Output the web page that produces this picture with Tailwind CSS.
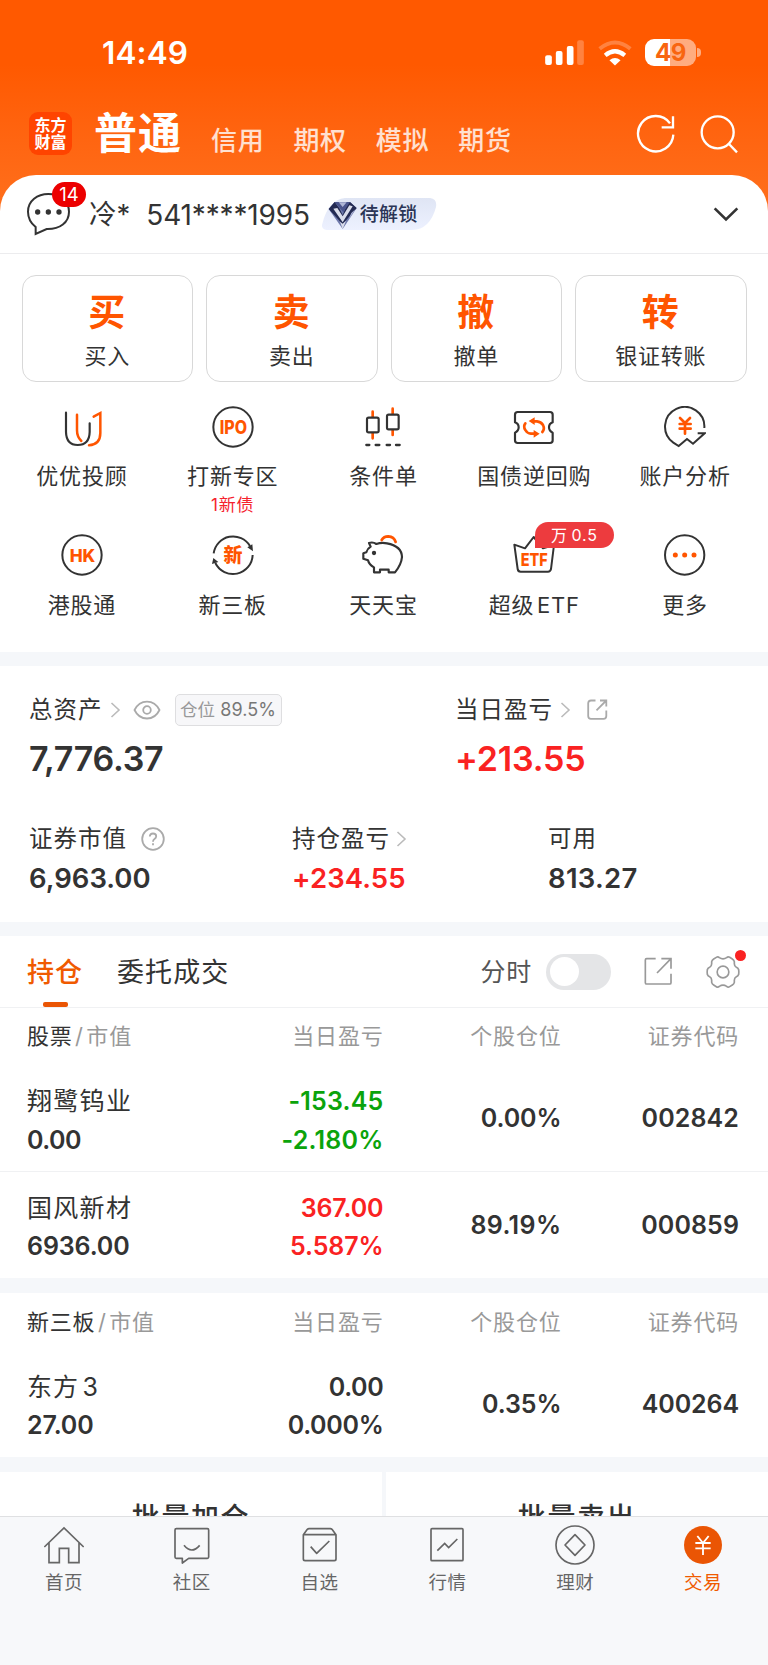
<!DOCTYPE html>
<html lang="zh-CN">
<head>
<meta charset="utf-8">
<title>普通交易</title>
<script src="https://cdn.jsdelivr.net/npm/@tailwindcss/browser@4"></script>
</head>
<body class="w-[768px] h-[1665px] overflow-hidden bg-white text-[#333] leading-none whitespace-nowrap font-['Inter','Noto_Sans_CJK_SC',sans-serif]">
<div class="flex h-[1665px] flex-col overflow-hidden">

<header class="h-[215px] shrink-0 bg-linear-to-b from-[#ff5900] from-30% to-[#ff701c] text-white">
  <div class="flex h-[105px] items-center pl-[102px] pr-[67px]">
    <span class="text-[31.5px] font-semibold tracking-[0.1px]">14:49</span>
    <svg class="ml-auto h-[25px] w-[39px]" viewBox="484 117 116 75" fill="#fff"><rect x="484" y="163" width="20" height="29" rx="6"/><rect x="516" y="150" width="20" height="42" rx="6"/><rect x="549" y="135" width="20" height="57" rx="6"/><rect x="580" y="118" width="20" height="74" rx="6" opacity=".25"/></svg>
    <svg class="ml-[14px] h-[26px] w-[34px]" viewBox="640 115 104 78" fill="none" stroke="#fff"><path d="M645 141Q692 103 739 141" stroke-width="12" opacity=".25"/><path d="M662 161Q692 136 722 161" stroke-width="13"/><path d="M692 192L675 176Q692 162 709 176Z" fill="#fff" stroke="none"/></svg>
    <div class="ml-[13px] flex items-center gap-px">
      <div class="flex h-[27px] w-[51px] items-center justify-center rounded-[9px] bg-linear-to-r from-white from-50% to-white/50 to-50% text-[24px] font-bold tracking-[-0.5px] text-[#f86510]">49</div>
      <div class="h-[9px] w-[4px] rounded-r-full bg-white/50"></div>
    </div>
  </div>
  <div class="flex h-[57px] items-center pl-[29px] pr-[29px]">
    <div class="flex size-[43px] flex-col items-center justify-center rounded-[9px] bg-[#ff4400] text-[16px] font-bold leading-[17px]"><span>东方</span><span>财富</span></div>
    <span class="ml-[22px] text-[43px] font-bold tracking-[1px]">普通</span>
    <div class="flex gap-[29px] pl-[29px] pt-[14px] text-[26px] font-medium tracking-[0.7px] text-white/80"><span>信用</span><span>期权</span><span>模拟</span><span>期货</span></div>
    <svg class="ml-auto size-[40px]" viewBox="755 343 120 120" fill="none" stroke="#fff" stroke-width="7"><path d="M867 405A53 53 0 1 1 857 371M866 350V383H832"/></svg>
    <svg class="ml-[23px] size-[40px]" viewBox="943 341 120 120" fill="none" stroke="#fff" stroke-width="7"><circle cx="999" cy="396" r="48"/><path d="M1033 431L1057 456"/></svg>
  </div>
</header>

<section class="-mt-[40px] flex h-[79px] shrink-0 items-center rounded-t-[36px] border-b border-[#ececee] bg-white pl-[26px] pr-[29px]">
  <div class="relative h-[44px] w-[46px]">
    <svg class="h-[44px] w-[46px]" viewBox="78 576 138 132" fill="none" stroke="#333" stroke-width="6"><path d="M107 702V681C92 669 84 653 84 635C84 603 112 582 145 582C180 582 207 604 207 635C207 667 180 688 140 687Z"/><g fill="#333" stroke="none"><circle cx="113" cy="636" r="8"/><circle cx="145" cy="636" r="8"/><circle cx="177" cy="636" r="8"/></g></svg>
    <span class="absolute left-[26px] -top-[10px] flex h-[25px] w-[34px] items-center justify-center rounded-full bg-[#ec0000] text-[18.5px] text-white">14</span>
  </div>
  <span class="ml-[17px] pt-[2px] text-[27.5px] tracking-[0px]">冷*</span>
  <span class="ml-[16px] pt-[2px] text-[28px] tracking-[-0.15px]">541****1995</span>
  <div class="relative ml-[12px] flex h-[32px] w-[115px] items-center">
    <svg class="absolute inset-0 h-[32px] w-[115px]" viewBox="966 595 345 96"><defs><linearGradient id="tag" x1="0" y1="0" x2="0" y2="1"><stop stop-color="#dfe5f4"/><stop offset="1" stop-color="#edf1ff"/></linearGradient></defs><path fill="url(#tag)" d="M1035 595H1290Q1312 598 1308 622Q1290 690 1236 691H980Q962 688 967 672Q985 600 1035 595Z"/><path fill="#6f79ab" d="M986 628L1004 607H1050L1070 625L1028 688Z"/><path fill="#232a52" d="M986 628L1004 607L1018 626L1028 646L1044 607H1050L1070 625L1028 674Z"/><path fill="#d9dcea" d="M1000 627L1012 625L1028 650L1048 617L1058 620L1028 668Z"/><path fill="#4a548c" d="M1004 607H1050L1030 638Z"/><path fill="#aeb5d6" d="M1016 608L1040 608L1028 622ZM1054 640L1066 629L1046 659Z"/><path fill="#d9dcea" d="M1020 666L1028 672L1038 663L1028 688Z"/></svg>
    <span class="relative pl-[38px] pt-px text-[19px] font-medium tracking-[0.2px] text-[#2b3556]">待解锁</span>
  </div>
  <svg class="ml-auto h-[15px] w-[26px]" viewBox="988 620 78 45" fill="none" stroke="#333" stroke-width="8"><path d="M993 624L1027 657L1061 624"/></svg>
</section>

<section class="mt-[21px] grid h-[107px] shrink-0 grid-cols-4 gap-[13px] px-[21.5px] text-[22px] tracking-[0.8px]">
  <div class="flex flex-col items-center rounded-[14px] border border-[#d8d8d8] pt-[13px]"><div class="flex h-[46px] items-center text-[37px] font-bold text-[#ff5500]">买</div><div class="flex h-[41px] items-center">买入</div></div>
  <div class="flex flex-col items-center rounded-[14px] border border-[#d8d8d8] pt-[13px]"><div class="flex h-[46px] items-center text-[37px] font-bold text-[#ff5500]">卖</div><div class="flex h-[41px] items-center">卖出</div></div>
  <div class="flex flex-col items-center rounded-[14px] border border-[#d8d8d8] pt-[13px]"><div class="flex h-[46px] items-center text-[37px] font-bold text-[#ff5500]">撤</div><div class="flex h-[41px] items-center">撤单</div></div>
  <div class="flex flex-col items-center rounded-[14px] border border-[#d8d8d8] pt-[13px]"><div class="flex h-[46px] items-center text-[37px] font-bold text-[#ff5500]">转</div><div class="flex h-[41px] items-center">银证转账</div></div>
</section>

<section class="mt-[24px] grid h-[246px] shrink-0 grid-cols-5 grid-rows-[128px_118px] pl-[6.5px] pr-[7.5px] text-[22px] tracking-[0.8px]">
  <div class="flex flex-col items-center">
    <svg class="size-[42px]" viewBox="185 437 126 126" fill="none" stroke-width="6.5" stroke-linecap="round"><path stroke="#333" d="M200 457V515Q201 554 235 554Q270 554 271 515V489"/><path stroke="#ff5500" stroke-width="7.5" d="M233 463V510Q233 530 246 542M283 469L303 458V518Q303 552 269 555"/></svg>
    <div class="mt-[10px] flex h-[36px] items-center">优优投顾</div>
  </div>
  <div class="flex flex-col items-center">
    <svg class="size-[42px]" viewBox="637 437 126 126"><circle cx="700" cy="500" r="59" fill="none" stroke="#333" stroke-width="6"/><text x="660" y="520" textLength="82" lengthAdjust="spacingAndGlyphs" font-size="55" font-weight="800" letter-spacing="0" fill="#ff5500">IPO</text></svg>
    <div class="mt-[10px] flex h-[36px] items-center">打新专区</div>
    <div class="flex h-[23px] items-center text-[17px] tracking-[0.9px] text-[#f5222d]">1新债</div>
  </div>
  <div class="flex flex-col items-center">
    <svg class="size-[42px]" viewBox="-63 437 126 126" fill="none" stroke="#333" stroke-width="6.5" stroke-linecap="round"><g stroke="#ff5500" stroke-width="8"><path d="M29 445V460M29 510V524M-31 454V469M-31 519V534"/></g><rect x="12" y="463" width="35" height="44" rx="5"/><rect x="-48" y="472" width="35" height="44" rx="5"/><path stroke-width="7" d="M-50 554H-41M-22 554H-11M11 554H21M39 554H50"/></svg>
    <div class="mt-[10px] flex h-[36px] items-center">条件单</div>
  </div>
  <div class="flex flex-col items-center">
    <svg class="size-[42px]" viewBox="390 437 126 126" fill="none" stroke="#333" stroke-width="6.5" stroke-linejoin="round"><path d="M404 455H501Q509 455 509 463V486Q498 490 498 501Q498 512 509 517V540Q509 548 501 548H404Q396 548 396 540V517Q407 512 407 501Q407 490 396 486V463Q396 455 404 455Z"/><path stroke="#ff5500" stroke-width="8" stroke-linecap="round" d="M478 515Q486 506 480 494Q474 484 462 483H450M427 489Q420 498 427 509Q432 519 444 520H456"/><path fill="#ff5500" stroke="none" d="M455 471L437 482L455 494ZM452 509L470 520L452 532Z"/></svg>
    <div class="mt-[10px] flex h-[36px] items-center">国债逆回购</div>
  </div>
  <div class="flex flex-col items-center">
    <svg class="size-[42px]" viewBox="842 437 126 126" fill="none" stroke="#333" stroke-width="6"><path d="M963 503A59 59 0 1 0 870 547L886 557L911 536L929 550L964 519H943"/><path stroke="#ff5500" stroke-width="8" stroke-linecap="round" d="M890 473L905 488L920 473M905 488V520M889 491H922M889 505H922"/></svg>
    <div class="mt-[10px] flex h-[36px] items-center">账户分析</div>
  </div>
  <div class="flex flex-col items-center">
    <svg class="size-[42px]" viewBox="185 103 126 126"><circle cx="248" cy="166" r="59" fill="none" stroke="#333" stroke-width="6"/><text x="211" y="186" textLength="77" lengthAdjust="spacingAndGlyphs" font-size="53" font-weight="800" letter-spacing="0" fill="#ff5500">HK</text></svg>
    <div class="mt-[11px] flex h-[36px] items-center">港股通</div>
  </div>
  <div class="flex flex-col items-center">
    <svg class="size-[42px]" viewBox="637 103 126 126" fill="none" stroke="#333" stroke-width="6"><path d="M642 161A59 59 0 0 1 751 139M759 166A59 59 0 0 1 647 190"/><path fill="#333" stroke="none" d="M743 143L758 134L760 155ZM637 193L641 175L656 187Z"/><text x="700" y="187" text-anchor="middle" font-size="57" font-weight="900" letter-spacing="0" fill="#ff5500" stroke="none">新</text></svg>
    <div class="mt-[11px] flex h-[36px] items-center">新三板</div>
  </div>
  <div class="flex flex-col items-center">
    <svg class="size-[42px]" viewBox="-63 103 126 126" fill="none" stroke="#333" stroke-width="6.5" stroke-linejoin="round"><path d="M-42 130Q-30 126 -20 133Q-5 128 12 131Q56 139 57 172Q55 195 36 218H17V210H-9V218H-27V203Q-42 195 -45 182L-59 177V161L-50 158Q-47 147 -37 141Z"/><circle cx="-27" cy="160" r="6.5" fill="#333" stroke="none"/><path stroke="#ff5500" stroke-width="8" stroke-linecap="round" d="M-4 121Q2 110 16 110Q33 111 38 127"/></svg>
    <div class="mt-[11px] flex h-[36px] items-center">天天宝</div>
  </div>
  <div class="relative flex flex-col items-center">
    <svg class="size-[42px]" viewBox="390 103 126 126" fill="none" stroke="#333" stroke-width="6" stroke-linejoin="round"><path d="M394 135L404 208Q405 216 413 216H495Q502 216 504 208L513 136L480 146L452 112L426 146Z"/><text x="413" y="198" textLength="81" lengthAdjust="spacingAndGlyphs" font-size="54" font-weight="800" letter-spacing="0" fill="#ff5500" stroke="none">ETF</text></svg>
    <div class="absolute left-[76px] -top-[12px] flex h-[26px] w-[79px] items-center justify-center rounded-[13px] rounded-bl-none bg-[#ed3b3e] text-[16px] text-white">万&thinsp;0.5</div>
    <div class="mt-[11px] flex h-[36px] items-center">超级&hairsp;ETF</div>
  </div>
  <div class="flex flex-col items-center">
    <svg class="size-[42px]" viewBox="842 103 126 126"><circle cx="904" cy="166" r="59" fill="none" stroke="#333" stroke-width="6"/><g fill="#ff5500"><circle cx="876" cy="166" r="7.5"/><circle cx="904" cy="166" r="7.5"/><circle cx="932" cy="166" r="7.5"/></g></svg>
    <div class="mt-[11px] flex h-[36px] items-center">更多</div>
  </div>
</section>

<div class="h-[14px] shrink-0 bg-[#f5f7fa]"></div>

<section class="h-[256px] shrink-0 pt-[20px] text-[23.5px] tracking-[1px]">
  <div class="flex">
    <div class="w-[455px] pl-[29px]">
      <div class="flex h-[47px] items-center">
        <span>总资产</span>
        <svg class="ml-[7px] h-[16px] w-[11px]" viewBox="0 0 11 16" fill="none" stroke="#bbb" stroke-width="1.6"><path d="M1.5 1L9 8L1.5 15"/></svg>
        <svg class="ml-[12px] h-[20px] w-[28px]" viewBox="0 0 28 20" fill="none" stroke="#aaa" stroke-width="1.8"><path d="M1.5 10C7-1.3 21-1.3 26.500 10C21 21.300 7 21.300 1.500 10Z" stroke-linejoin="round"/><circle cx="14" cy="10" r="3.800"/></svg>
        <div class="ml-[14px] flex h-[32px] w-[107px] items-center justify-center rounded-[5px] border border-[#dedee0] bg-[#f7f7f9] text-[17.5px] tracking-[0.1px] text-[#999]">仓位<span class="ml-[5px] text-[18px] text-[#777]">89.5%</span></div>
      </div>
      <div class="flex h-[51px] items-center text-[34px] font-semibold tracking-[-0.3px]">7,776.37</div>
    </div>
    <div>
      <div class="flex h-[47px] items-center">
        <span>当日盈亏</span>
        <svg class="ml-[7px] h-[16px] w-[11px]" viewBox="0 0 11 16" fill="none" stroke="#bbb" stroke-width="1.6"><path d="M1.5 1L9 8L1.5 15"/></svg>
        <svg class="ml-[16px] size-[21px]" viewBox="0 0 21 21" fill="none" stroke="#aaa" stroke-width="1.800"><path d="M8.500 1.500H4Q1.200 1.500 1.200 4.300V17Q1.200 19.800 4 19.800H16.500Q19.300 19.800 19.300 17V11.500M13 1.500H19.300V7.500M19.300 1.500L9.500 11.300"/></svg>
      </div>
      <div class="flex h-[51px] items-center text-[34px] font-semibold tracking-[-0.2px] text-[#fa2222]">+213.55</div>
    </div>
  </div>
  <div class="mt-[31px] flex">
    <div class="w-[292px] pl-[29px]">
      <div class="flex h-[47px] items-center">证券市值
        <svg class="ml-[14px] size-[24px]" viewBox="0 0 24 24" fill="none" stroke="#aaa" stroke-width="1.8"><circle cx="12" cy="12" r="10.800"/><path d="M8.800 9.500Q9 6.500 12 6.500Q15.200 6.500 15.200 9.300Q15.200 10.900 13.500 12Q12 13 12 14.800M12 16.300V18.200"/></svg>
      </div>
      <div class="flex h-[34px] items-center text-[27.5px] font-semibold tracking-[0px]">6,963.00</div>
    </div>
    <div class="w-[256px]">
      <div class="flex h-[47px] items-center">持仓盈亏
        <svg class="ml-[6px] h-[16px] w-[11px]" viewBox="0 0 11 16" fill="none" stroke="#bbb" stroke-width="1.6"><path d="M1.5 1L9 8L1.5 15"/></svg>
      </div>
      <div class="flex h-[34px] items-center text-[27.5px] font-semibold tracking-[0.1px] text-[#fa2222]">+234.55</div>
    </div>
    <div>
      <div class="flex h-[47px] items-center">可用</div>
      <div class="flex h-[34px] items-center text-[27.5px] font-semibold tracking-[0.3px]">813.27</div>
    </div>
  </div>
</section>

<div class="h-[14px] shrink-0 bg-[#f5f7fa]"></div>

<section class="shrink-0 tracking-[0.8px]">
  <div class="flex h-[72px] items-center border-b border-[#f0f1f3] pl-[27px] pr-[28px] text-[27px]">
    <div class="relative flex h-[71px] items-center pt-[2px] font-medium tracking-[1px] text-[#f05a00]">持仓<span class="absolute bottom-0 left-[16px] h-[5px] w-[25px] rounded-[2px] bg-[#ea5504]"></span></div>
    <span class="ml-[34px] pt-[2px] tracking-[1.1px]">委托成交</span>
    <span class="ml-auto pt-[2px] text-[25px] text-[#555]">分时</span>
    <div class="ml-[14px] flex h-[36px] w-[65px] items-center rounded-full bg-[#e4e5e7] px-[3.500px]"><div class="size-[29px] rounded-full bg-white"></div></div>
    <svg class="ml-[33px] size-[29px]" viewBox="782 82 87 87" fill="none" stroke="#999" stroke-width="5"><path d="M817 87H790Q786 87 786 91V159Q786 163 790 163H859Q863 163 863 159V132M834 87H863V117M863 87L821 130"/></svg>
    <div class="relative ml-[33px] size-[34px]">
      <svg class="size-[34px]" viewBox="-51 -51 102 102" fill="none" stroke="#999" stroke-width="5" stroke-linejoin="round"><path d="M47-7Q48 0 47 7Q45 12 40 14Q34 17 34 25V31Q33 36 28 39L20 44Q15 47 11 43Q0 36 -11 43Q-15 47 -20 44L-28 39Q-33 36 -34 31V25Q-34 17 -40 14Q-45 12 -47 7Q-48 0 -47-7Q-45-12-40-14Q-34-17-34-25V-31Q-33-36-28-39L-20-44Q-15-47-11-43Q0-36 11-43Q15-47 20-44L28-39Q33-36 34-31V-25Q34-17 40-14Q45-12 47-7Z"/><circle r="17.500"/></svg>
      <span class="absolute -top-[5px] left-[29px] size-[11px] rounded-full bg-[#fa2222]"></span>
    </div>
  </div>
  <div class="grid h-[56px] grid-cols-[356.5px_178px_177.5px] items-center pl-[27px] text-right text-[22px] text-[#999]">
    <div class="flex justify-between"><span><span class="text-[#333]">股票</span><span class="px-[2.500px]">/</span>市值</span><span>当日盈亏</span></div><span>个股仓位</span><span>证券代码</span>
  </div>
  <div class="mt-[2px] grid h-[106px] grid-cols-[356.5px_178px_177.5px] items-center border-b border-[#f0f1f3] pl-[27px] text-right text-[25px] font-semibold tracking-[-0.1px]">
    <div class="flex justify-between"><div class="pt-[5px] text-left"><div class="flex h-[38px] items-center font-normal tracking-[1.3px]">翔鹭钨业</div><div class="flex h-[39px] items-center tracking-[-0.5px]">0.00</div></div><div class="pt-[5px] text-[#0ba30b]"><div class="flex h-[38px] items-center justify-end tracking-[0.2px]">-153.45</div><div class="flex h-[39px] items-center justify-end tracking-[0.2px]">-2.180%</div></div></div>
    <span>0.00%</span><span class="tracking-[0.1px]">002842</span>
  </div>
  <div class="grid h-[106px] grid-cols-[356.5px_178px_177.5px] items-center pl-[27px] text-right text-[25px] font-semibold tracking-[-0.1px]">
    <div class="flex justify-between"><div class="pt-[5px] text-left"><div class="flex h-[38px] items-center font-normal tracking-[1.3px]">国风新材</div><div class="flex h-[39px] items-center">6936.00</div></div><div class="pt-[5px] text-[#fa2222]"><div class="flex h-[38px] items-center justify-end">367.00</div><div class="flex h-[39px] items-center justify-end">5.587%</div></div></div>
    <span class="tracking-[0.4px]">89.19%</span><span class="tracking-[0.1px]">000859</span>
  </div>
</section>

<div class="h-[15px] shrink-0 bg-[#f5f7fa]"></div>

<section class="shrink-0 tracking-[0.8px]">
  <div class="grid h-[58px] grid-cols-[356.5px_178px_177.5px] items-center pl-[27px] text-right text-[22px] text-[#999]">
    <div class="flex justify-between"><span><span class="text-[#333]">新三板</span><span class="px-[2.500px]">/</span>市值</span><span>当日盈亏</span></div><span>个股仓位</span><span>证券代码</span>
  </div>
  <div class="grid h-[106px] grid-cols-[356.5px_178px_177.5px] items-center pl-[27px] text-right text-[25px] font-semibold tracking-[-0.1px]">
    <div class="flex justify-between"><div class="pt-[5px] text-left"><div class="flex h-[38px] items-center font-normal tracking-[1.1px]">东方&hairsp;3</div><div class="flex h-[39px] items-center">27.00</div></div><div class="pt-[5px]"><div class="flex h-[38px] items-center justify-end tracking-[-0.3px]">0.00</div><div class="flex h-[39px] items-center justify-end tracking-[-0.3px]">0.000%</div></div></div>
    <span>0.35%</span><span>400264</span>
  </div>
</section>

<section class="flex h-[59px] shrink-0 gap-[4px] overflow-hidden bg-[#f5f7fa] pt-[15px] text-[28px] font-medium tracking-[1.6px]">
  <div class="flex h-[91px] flex-1 items-center justify-center bg-white">批量加仓</div>
  <div class="flex h-[91px] flex-1 items-center justify-center bg-white">批量卖出</div>
</section>

<nav class="grid h-[149px] shrink-0 grid-cols-6 border-t border-[#dfe0e2] bg-[#f7f8fa] pt-[8px] pr-px text-center text-[18.5px] tracking-[0.5px] text-[#666]">
  <div class="flex flex-col items-center"><svg class="size-[40px]" viewBox="133 255 120 120" fill="none" stroke="#666" stroke-width="5"><path d="M134 321L193 264L252 321M148 309V368H179V325H207V368H238V309"/></svg><div class="flex h-[34px] items-center">首页</div></div>
  <div class="flex flex-col items-center"><svg class="size-[40px]" viewBox="517 255 120 120" fill="none" stroke="#666" stroke-width="5" stroke-linejoin="round"><path d="M530 266H623Q627 266 627 270V351Q627 355 623 355H567L548 369V355H530Q526 355 526 351V270Q526 266 530 266Z"/><path d="M553 316Q576 344 600 316"/></svg><div class="flex h-[34px] items-center">社区</div></div>
  <div class="flex flex-col items-center"><svg class="size-[40px]" viewBox="900 255 120 120" fill="none" stroke="#666" stroke-width="5" stroke-linejoin="round"><path d="M910 284L922 268Q924 266 927 266H991Q994 266 996 268L1008 284V357Q1008 362 1003 362H915Q910 362 910 357ZM910 284H1008M932 320L950 340L988 303"/></svg><div class="flex h-[34px] items-center">自选</div></div>
  <div class="flex flex-col items-center"><svg class="size-[40px]" viewBox="132 255 120 120" fill="none" stroke="#666" stroke-width="5"><rect x="144" y="266" width="96" height="96" rx="3"/><path d="M163 332L185 310L197 323L223 297"/></svg><div class="flex h-[34px] items-center">行情</div></div>
  <div class="flex flex-col items-center"><svg class="size-[40px]" viewBox="516 255 120 120" fill="none" stroke="#666" stroke-width="5" stroke-linejoin="round"><circle cx="576" cy="315" r="57"/><path d="M576 284L606 315L576 346L546 315Z"/></svg><div class="flex h-[34px] items-center">理财</div></div>
  <div class="flex flex-col items-center text-[#f05a00]"><svg class="size-[40px]" viewBox="899 255 120 120" fill="none" stroke="#fff" stroke-width="5.500"><circle cx="959" cy="315" r="57" fill="#ea5504" stroke="none"/><path d="M942 288L959 309L976 288M959 309V345M936 309H982M936 325H982"/></svg><div class="flex h-[34px] items-center">交易</div></div>
</nav>
</div>
</body>
</html>
